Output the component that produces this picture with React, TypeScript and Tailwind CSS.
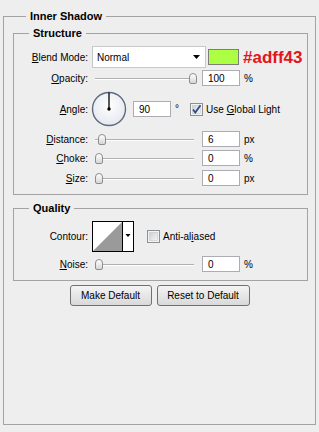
import React from 'react';

const Mn = ({ children }: { children: React.ReactNode }) => (
  <span className="underline decoration-[1px] underline-offset-[1px]">{children}</span>
);

const Label = ({ children }: { children: React.ReactNode }) => (
  <div className="w-[74px] shrink-0 text-right">{children}</div>
);

const Slider = ({ thumb }: { thumb: number }) => (
  <div className="relative ml-[4px] h-[16px] w-[106px] shrink-0">
    <div className="absolute left-[3px] right-[4px] top-[8px] h-[2px] border-t border-[#b0b0b0] bg-white" />
    <div
      className="absolute top-[3px] h-[11px] w-[8px] rounded-t-[4px] rounded-b-[2px] border border-[#8e8e8e] bg-linear-to-b from-white to-[#d6d6d6]"
      style={{ left: thumb }}
    />
  </div>
);

const Field = ({ value, className = 'ml-[4px] w-[38px]' }: { value: string; className?: string }) => (
  <div className={`flex h-[16px] shrink-0 items-center border border-[#abadb3] bg-white pl-[5px] ${className}`}>
    {value}
  </div>
);

const Check = ({ checked }: { checked?: boolean }) => (
  <svg width="13" height="13" viewBox="0 0 13 13" className="shrink-0">
    <defs>
      <linearGradient id={checked ? 'cbg1' : 'cbg2'} x1="0" y1="0" x2="1" y2="1">
        <stop offset="0" stopColor="#cbcfd5" />
        <stop offset="1" stopColor="#f6f6f6" />
      </linearGradient>
    </defs>
    <rect x="0.5" y="0.5" width="12" height="12" fill="#f4f4f4" stroke="#8e8f8f" />
    <rect x="2.5" y="2.5" width="8" height="8" fill={`url(#${checked ? 'cbg1' : 'cbg2'})`} stroke="#c3c6cb" strokeWidth="0.6" />
    {checked && <path d="M3 6.5 L5.3 9.5 L10.5 2.2" fill="none" stroke="#2f4b8a" strokeWidth="1.8" />}
  </svg>
);

const SliderRow = ({
  label,
  thumb,
  value,
  unit,
  className
}: {
  label: React.ReactNode;
  thumb: number;
  value: string;
  unit: string;
  className: string;
}) => (
  <div className={`flex h-[16px] items-center ${className}`}>
    <Label>{label}</Label>
    <Slider thumb={thumb} />
    <Field value={value} />
    <span className="ml-[4px]">{unit}</span>
  </div>
);

const legend = 'ml-[15px] px-[4px] text-[11px] font-bold leading-[14px]';

export default function App() {
  return (
    <div className="h-[432px] w-[319px] bg-[#eeeeee] px-[3px] pt-[9px] font-['Liberation_Sans',Arial,sans-serif] text-[10px] text-black">
      <fieldset className="h-[416px] border border-[#a3a3a3] pl-[9px] pr-[7px]">
        <legend className="ml-[13px] px-[4px] text-[11px] font-bold leading-[14px]">Inner Shadow</legend>

        <fieldset className="mt-[3px] h-[169px] border border-[#a3a3a3]">
          <legend className={legend}>Structure</legend>

          <div className="mt-[6px] flex h-[22px] items-center">
            <Label>
              <Mn>B</Mn>lend Mode:
            </Label>
            <div className="ml-[4px] flex h-[22px] w-[114px] shrink-0 items-center justify-between border border-[#c8c8c8] bg-white pl-[4px] pr-[5px]">
              <span>Normal</span>
              <svg width="7" height="4" viewBox="0 0 7 4">
                <path d="M0 0 H7 L3.5 4 Z" fill="#000" />
              </svg>
            </div>
            <div className="ml-[2px] h-[16px] w-[31px] shrink-0 border border-[#7d7d7d] bg-[#adff43]" />
            <span className="ml-[4px] text-[17px] font-bold leading-none text-[#e3151c]">#adff43</span>
          </div>

          <SliderRow label={<><Mn>O</Mn>pacity:</>} thumb={97} value="100" unit="%" className="mt-[2px]" />

          <div className="mt-[5px] flex h-[36px] items-center">
            <Label>
              <Mn>A</Mn>ngle:
            </Label>
            <svg width="36" height="36" viewBox="0 0 36 36" className="ml-[3px] shrink-0">
              <defs>
                <radialGradient id="dial" cx="0.5" cy="0.4" r="0.6">
                  <stop offset="0" stopColor="#ffffff" />
                  <stop offset="1" stopColor="#e4e8ee" />
                </radialGradient>
              </defs>
              <circle cx="18" cy="18" r="16.5" fill="url(#dial)" stroke="#5d6b7f" strokeWidth="1.4" />
              <line x1="18" y1="1.5" x2="18" y2="18" stroke="#000" strokeWidth="1.3" />
              <circle cx="18" cy="18" r="1.7" fill="#000" />
            </svg>
            <Field value="90" className="ml-[6px] w-[38px]" />
            <span className="ml-[4px] w-[15px] shrink-0 -translate-y-[1px]">°</span>
            <Check checked />
            <span className="ml-[3px]">
              Use <Mn>G</Mn>lobal Light
            </span>
          </div>

          <SliderRow label={<><Mn>D</Mn>istance:</>} thumb={6} value="6" unit="px" className="mt-[4px]" />
          <SliderRow label={<><Mn>C</Mn>hoke:</>} thumb={3} value="0" unit="%" className="mt-[3px]" />
          <SliderRow label={<><Mn>S</Mn>ize:</>} thumb={3} value="0" unit="px" className="mt-[4px]" />
        </fieldset>

        <fieldset className="mt-[6px] h-[80px] border border-[#a3a3a3]">
          <legend className={legend}>Quality</legend>

          <div className="mt-[6px] flex h-[31px] items-center">
            <Label>Contour:</Label>
            <svg width="42" height="31" viewBox="0 0 42 31" className="ml-[4px] shrink-0">
              <rect x="0.5" y="0.5" width="41" height="30" fill="#fff" stroke="#000" />
              <polygon points="1,30 30,1 30,30" fill="#9a9a9a" />
              <line x1="30.5" y1="0" x2="30.5" y2="31" stroke="#000" />
              <path d="M33.5 13 H38.5 L36 16 Z" fill="#000" />
            </svg>
            <div className="ml-[13px] flex items-center">
              <Check />
            </div>
            <span className="ml-[3px]">
              Anti-al<Mn>i</Mn>ased
            </span>
          </div>

          <SliderRow label={<><Mn>N</Mn>oise:</>} thumb={3} value="0" unit="%" className="mt-[4px]" />
        </fieldset>

        <div className="mt-[4px] flex justify-center gap-[5px] pr-[2px]">
          <button className="h-[21px] w-[82px] rounded-[3px] border border-[#707070] bg-linear-to-b from-[#f4f4f4] to-[#d9d9d9] text-[10px]">
            Make Default
          </button>
          <button className="h-[21px] w-[93px] rounded-[3px] border border-[#707070] bg-linear-to-b from-[#f4f4f4] to-[#d9d9d9] text-[10px]">
            Reset to Default
          </button>
        </div>
      </fieldset>
    </div>
  );
}
